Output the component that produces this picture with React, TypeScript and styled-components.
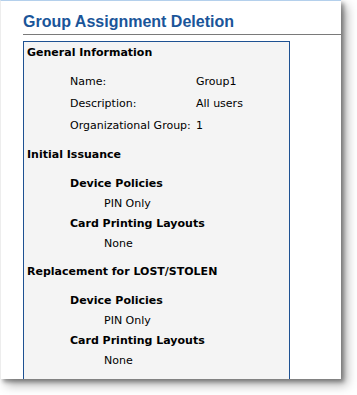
import React from 'react';
import styled, { createGlobalStyle } from 'styled-components';

const GlobalStyle = createGlobalStyle`
	*, *::before, *::after {
		box-sizing: border-box;
	}
	html, body {
		margin: 0;
		padding: 0;
		background: #ffffff;
	}
	body {
		font-family: "DejaVu Sans", Verdana, sans-serif;
		color: #000;
	}
`;

const Frame = styled.div`
	width: 357px;
	height: 395px;
	overflow: hidden;
`;

const Page = styled.div`
	display: flex;
	flex-direction: column;
	width: 341px;
	height: 379px;
	overflow: hidden;
	background: #ffffff;
	border-top: 1px solid #b4d0ec;
	border-left: 1px solid #ededed;
	box-shadow: 3px 3px 4px rgba(0, 0, 0, 0.35), 6px 6px 10px rgba(0, 0, 0, 0.3);
	padding-left: 22px;
`;

const Title = styled.h1`
	flex-shrink: 0;
	margin: 0;
	padding-top: 11px;
	height: 34px;
	font-family: "Liberation Sans", Arial, sans-serif;
	font-size: 16px;
	font-weight: bold;
	line-height: 20px;
	color: #1a5599;
	border-bottom: 1px solid #7a7a7a;
`;

const Panel = styled.div`
	flex: 1;
	margin-top: 6px;
	width: 267px;
	background: #f4f4f4;
	border: 1px solid #1e5192;
	border-bottom: none;
	padding-left: 3px;
	font-size: 11px;
`;

const SectionTitle = styled.div<{ $gap: number }>`
	margin-top: ${(p) => p.$gap}px;
	font-weight: bold;
	height: 20px;
	padding-top: 2px;
	line-height: 18px;
`;

const InfoTable = styled.div`
	margin-top: 8px;
	padding-left: 43px;
	display: grid;
	grid-template-columns: 126px auto;
	grid-auto-rows: 22px;
	align-items: center;
`;

const PolicyList = styled.div`
	margin-top: 9px;
	padding-left: 43px;
`;

const PolicyTitle = styled.div`
	font-weight: bold;
	height: 20px;
	padding-top: 2px;
	line-height: 18px;
`;

const PolicyValue = styled.div`
	padding-left: 34px;
	height: 20px;
	padding-top: 2px;
	line-height: 18px;
`;

const info = [
	['Name:', 'Group1'],
	['Description:', 'All users'],
	['Organizational Group:', '1'],
];

const Policies = () => (
	<PolicyList>
		<PolicyTitle>Device Policies</PolicyTitle>
		<PolicyValue>PIN Only</PolicyValue>
		<PolicyTitle>Card Printing Layouts</PolicyTitle>
		<PolicyValue>None</PolicyValue>
	</PolicyList>
);

export default function App() {
	return (
		<Frame>
			<GlobalStyle />
			<Page>
				<Title>Group Assignment Deletion</Title>
				<Panel>
					<SectionTitle $gap={0}>General Information</SectionTitle>
					<InfoTable>
						{info.map(([label, value]) => (
							<React.Fragment key={label}>
								<span>{label}</span>
								<span>{value}</span>
							</React.Fragment>
						))}
					</InfoTable>
					<SectionTitle $gap={8}>Initial Issuance</SectionTitle>
					<Policies />
					<SectionTitle $gap={8}>Replacement for LOST/STOLEN</SectionTitle>
					<Policies />
				</Panel>
			</Page>
		</Frame>
	);
}
